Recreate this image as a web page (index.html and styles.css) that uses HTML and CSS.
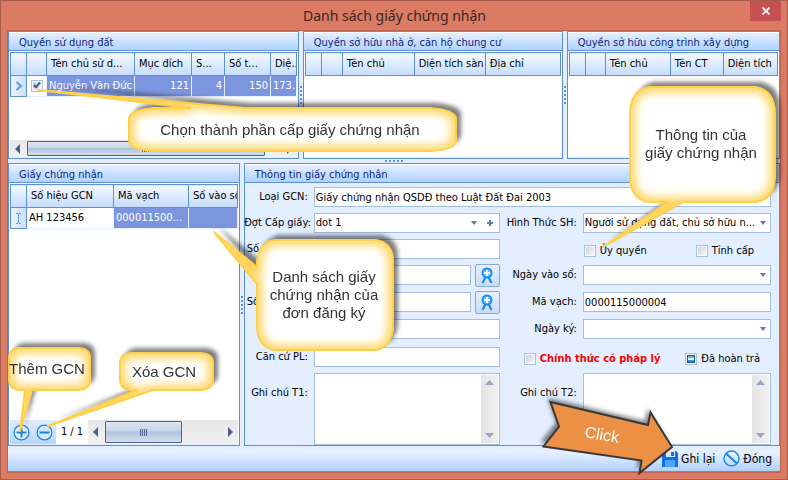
FILE: index.html
```html
<!DOCTYPE html>
<html lang="vi">
<head>
<meta charset="utf-8">
<title>Danh sách giấy chứng nhận</title>
<link rel="stylesheet" href="styles.css">
</head>
<body>
<div class="window">
  <header class="titlebar">
    <h1 class="title">Danh sách giấy chứng nhận</h1>
    <button class="close" type="button" aria-label="Close"><svg width="10" height="8" viewBox="0 0 10 8"><path d="M1.5 .5l7 7M8.5 .5l-7 7" stroke="#fff" stroke-width="1.8"/></svg></button>
  </header>
  <main class="client">
    <div class="top">
      <section class="panel panel-land">
        <h2 class="panel-title">Quyền sử dụng đất</h2>
        <div class="panel-body">
          <table class="grid">
            <colgroup><col class="w16"><col class="w20"><col class="w88"><col class="w57"><col class="w33"><col class="w46"><col></colgroup>
            <thead><tr><th></th><th></th><th>Tên chủ sử d...</th><th>Mục đích</th><th>S...</th><th>Số t...</th><th>Diệ...</th></tr></thead>
            <tbody><tr>
              <td class="mark"><svg width="8" height="10" viewBox="0 0 8 10"><path d="M1.500 1l4.500 4-4.500 4" fill="none" stroke="#5e9be6" stroke-width="2"/></svg></td>
              <td class="pick"><input class="check" type="checkbox" checked aria-label="Nguyễn Văn Đức"></td>
              <td class="sel">Nguyễn Văn Đức</td><td class="sel num">121</td><td class="sel num">4</td><td class="sel num">150</td><td class="sel">173.</td>
            </tr></tbody>
          </table>
          <div class="hscroll hscroll-land">
            <svg width="17" height="16" viewBox="0 0 17 16"><path d="M10 3v10L5 8z" fill="#4a5f8c"/></svg>
            <span class="thumb"><i class="grip"></i></span>
            <svg width="32" height="16" viewBox="0 0 32 16"><path d="M22 3v10l5-5z" fill="#4a5f8c"/></svg>
          </div>
        </div>
      </section>
      <div class="split-v"><i class="dots-v"></i></div>
      <section class="panel panel-house">
        <h2 class="panel-title">Quyền sở hữu nhà ở, căn hộ chung cư</h2>
        <div class="panel-body">
          <table class="grid">
            <colgroup><col class="w16"><col class="w21"><col class="w72"><col class="w71"><col></colgroup>
            <thead><tr><th></th><th></th><th>Tên chủ</th><th>Diện tích sàn</th><th>Địa chỉ</th></tr></thead>
          </table>
        </div>
      </section>
      <div class="split-v"><i class="dots-v"></i></div>
      <section class="panel panel-works">
        <h2 class="panel-title">Quyền sở hữu công trình xây dựng</h2>
        <div class="panel-body">
          <table class="grid">
            <colgroup><col class="w16"><col class="w20"><col class="w65"><col class="w53"><col></colgroup>
            <thead><tr><th></th><th></th><th>Tên chủ</th><th>Tên CT</th><th>Diện tích</th></tr></thead>
          </table>
        </div>
      </section>
    </div>
    <div class="split-h"><i class="dots-h"></i></div>
    <div class="bottom">
      <section class="panel panel-certs">
        <h2 class="panel-title">Giấy chứng nhận</h2>
        <div class="panel-body">
          <table class="grid">
            <colgroup><col class="w16"><col class="w87"><col class="w75"><col></colgroup>
            <thead><tr><th></th><th>Số hiệu GCN</th><th>Mã vạch</th><th>Số vào sổ</th></tr></thead>
            <tbody><tr>
              <td class="mark"><svg width="7" height="11" viewBox="0 0 7 11"><path d="M1 .5h2M4 .5h2M1 10.500h2M4 10.500h2M3.500 1v9" stroke="#5e9be6"/></svg></td>
              <td>AH 123456</td><td class="sel">000011500...</td><td class="sel"></td>
            </tr></tbody>
          </table>
          <div class="navigator">
            <div class="nav-buttons">
              <button class="round" type="button" aria-label="Thêm GCN"><svg width="17" height="17" viewBox="0 0 17 17"><circle cx="8.500" cy="8.500" r="7.400" fill="#e4f0ff" stroke="#1e86e0" stroke-width="1.300"/><path d="M3.500 8.500h10M8.500 3.500v10" stroke="#1680e4" stroke-width="2"/></svg></button>
              <button class="round" type="button" aria-label="Xóa GCN"><svg width="17" height="17" viewBox="0 0 17 17"><circle cx="8.500" cy="8.500" r="7.400" fill="#d2e6ff" stroke="#1e86e0" stroke-width="1.300"/><path d="M3.500 8.500h10" stroke="#1680e4" stroke-width="2"/></svg></button>
            </div>
            <span class="pager">1 / 1</span>
            <div class="hscroll hscroll-certs">
              <svg width="17" height="24" viewBox="0 0 17 24"><path d="M10 7v10l-5-5z" fill="#4a5f8c"/></svg>
              <span class="thumb"><i class="grip"></i></span>
              <svg class="push" width="17" height="24" viewBox="0 0 17 24"><path d="M7 7v10l5-5z" fill="#4a5f8c"/></svg>
            </div>
          </div>
        </div>
      </section>
      <div class="split-v"><i class="dots-v"></i></div>
      <section class="panel panel-info">
        <h2 class="panel-title">Thông tin giấy chứng nhân</h2>
        <form class="form">
          <label for="kind">Loại GCN:</label>
          <input class="box wide" id="kind" value="Giấy chứng nhận QSDĐ theo Luật Đất Đai 2003">

          <label class="flush" for="batch">Đợt Cấp giấy:</label>
          <div class="box combo">
            <select id="batch"><option>dot 1</option></select>
            <svg class="arrow" width="6" height="4" viewBox="0 0 6 4"><path d="M0 0h6L3 4z" fill="#5680b4"/></svg>
            <button class="plus" type="button" aria-label="+"><svg width="6" height="6" viewBox="0 0 6 6"><path d="M0 3h6M3 0v6" stroke="#5680b4" stroke-width="2"/></svg></button>
          </div>
          <label for="owner">Hình Thức SH:</label>
          <div class="box combo">
            <select id="owner"><option>Người sử dụng đất, chủ sở hữu n...</option></select>
            <svg class="arrow" width="6" height="4" viewBox="0 0 6 4"><path d="M0 0h6L3 4z" fill="#5680b4"/></svg>
          </div>

          <label class="start" for="serial">Số h:</label>
          <input class="box" id="serial">
          <div class="checks checks-a">
            <label class="opt"><input class="check" type="checkbox">Ủy quyền</label>
            <label class="opt"><input class="check" type="checkbox">Tỉnh cấp</label>
          </div>

          <div class="lookup">
            <input class="box" aria-label="Số">
            <button class="badge" type="button" aria-label="Số"><svg width="14" height="17" viewBox="0 0 14 17"><path d="M5.500 10L2.500 16M8.500 10l3 6" fill="none" stroke="#168aef" stroke-width="2.200"/><circle cx="7" cy="6" r="5.500" fill="#168aef"/><circle cx="7" cy="6" r="3.800" fill="#63bdff"/><path d="M4 6h6M7 3v6" stroke="#fff" stroke-width="2"/></svg></button>
          </div>
          <label for="date-in">Ngày vào sổ:</label>
          <div class="box combo">
            <select id="date-in"><option></option></select>
            <svg class="arrow" width="6" height="4" viewBox="0 0 6 4"><path d="M0 0h6L3 4z" fill="#5680b4"/></svg>
          </div>

          <label class="start" for="book">Số</label>
          <div class="lookup">
            <input class="box" id="book">
            <button class="badge" type="button" aria-label="Số"><svg width="14" height="17" viewBox="0 0 14 17"><path d="M5.500 10L2.500 16M8.500 10l3 6" fill="none" stroke="#168aef" stroke-width="2.200"/><circle cx="7" cy="6" r="5.500" fill="#168aef"/><circle cx="7" cy="6" r="3.800" fill="#63bdff"/><path d="M4 6h6M7 3v6" stroke="#fff" stroke-width="2"/></svg></button>
          </div>
          <label for="barcode">Mã vạch:</label>
          <input class="box" id="barcode" value="0000115000004">

          <input class="box second" aria-label="Người ký">
          <label for="date-sign">Ngày ký:</label>
          <div class="box combo">
            <select id="date-sign"><option></option></select>
            <svg class="arrow" width="6" height="4" viewBox="0 0 6 4"><path d="M0 0h6L3 4z" fill="#5680b4"/></svg>
          </div>

          <label for="basis">Căn cứ PL:</label>
          <input class="box" id="basis">
          <div class="checks checks-b">
            <label class="opt legal"><input class="check" type="checkbox">Chính thức có pháp lý</label>
            <label class="opt"><input class="check mixed" type="checkbox">Đã hoàn trả</label>
          </div>

          <label class="note" for="note1">Ghi chú T1:</label>
          <div class="box memo">
            <textarea id="note1"></textarea>
            <div class="vscroll"><svg width="9" height="5" viewBox="0 0 9 5"><path d="M0 5h9L4.500 0z" fill="#98a6cc"/></svg><svg width="9" height="5" viewBox="0 0 9 5"><path d="M0 0h9L4.500 5z" fill="#98a6cc"/></svg></div>
          </div>
          <label class="note" for="note2">Ghi chú T2:</label>
          <div class="box memo">
            <textarea id="note2"></textarea>
            <div class="vscroll"><svg width="9" height="5" viewBox="0 0 9 5"><path d="M0 5h9L4.500 0z" fill="#98a6cc"/></svg><svg width="9" height="5" viewBox="0 0 9 5"><path d="M0 0h9L4.500 5z" fill="#98a6cc"/></svg></div>
          </div>
        </form>
      </section>
    </div>
    <footer class="actions">
      <button class="action" type="button"><svg width="16" height="16" viewBox="0 0 16 16"><path d="M0 0h14l2 2v14H0z" fill="#0f6fe8"/><path d="M4 0h9v6H4z" fill="#d5e9ff"/><path d="M9 1h3v4H9z" fill="#0f6fe8"/><path d="M3 9h10v7H3z" fill="#4ea6fa"/></svg>Ghi lại</button>
      <button class="action" type="button"><svg width="17" height="17" viewBox="0 0 17 17"><circle cx="8.500" cy="8.500" r="7.500" fill="none" stroke="#1c8ae8" stroke-width="1.400"/><path d="M3 3.500l11 10" stroke="#1c8ae8" stroke-width="2.200"/></svg>Đóng</button>
    </footer>
  </main>

  <svg class="callouts" width="788" height="480" viewBox="0 0 788 480">
    <defs>
      <filter id="soft" x="-20%" y="-20%" width="140%" height="140%"><feGaussianBlur stdDeviation="2"/></filter>
      <filter id="glow" x="-20%" y="-20%" width="140%" height="140%"><feGaussianBlur stdDeviation="5"/></filter>
      <path id="c1" d="M154 108H190L38 90L245 108H430Q456 110 456 119V140Q456 150 430 151H154Q129 150 129 140V119Q129 110 154 108Z"/>
      <path id="c2" d="M649 87H756Q775 91 775 114V176Q775 199 756 202H683L603 247L667 202H649Q630 199 630 176V114Q630 91 649 87Z"/>
      <path id="c3" d="M274 240H376Q393 243 393 261V329Q391 347 376 350H274Q259 347 257 329V284L214 232L257 267V261Q259 243 274 240Z"/>
      <path id="c4" d="M19 348H79Q90 349 90 358V380Q90 389 79 390H32L20 431L25 390H19Q9 389 9 380V358Q9 349 19 348Z"/>
      <path id="c5" d="M131 353H201Q213 354 213 363V380Q213 389 201 390H153L48 426L137 390H131Q120 389 120 380V363Q120 354 131 353Z"/>
      <path id="arrow" d="M550.500 402L648 425L650.500 412.500L672 447L639.500 473L641.500 460.500L543.500 446.500L559 426.500Z"/>
      <clipPath id="k1"><use href="#c1"/></clipPath>
      <clipPath id="k2"><use href="#c2"/></clipPath>
      <clipPath id="k3"><use href="#c3"/></clipPath>
      <clipPath id="k4"><use href="#c4"/></clipPath>
      <clipPath id="k5"><use href="#c5"/></clipPath>
    </defs>
    <g class="shadow">
      <use href="#c1" x="5" y="-5"/><use href="#c2" x="5" y="-5"/><use href="#c3" x="5" y="-5"/><use href="#c4" x="5" y="-5"/><use href="#c5" x="5" y="-5"/><use href="#arrow" x="-3" y="-4"/>
    </g>
    <g class="face"><use href="#c1"/><use href="#c2"/><use href="#c3"/><use href="#c4"/><use href="#c5"/></g>
    <g class="inner">
      <g clip-path="url(#k1)"><use href="#c1" filter="url(#glow)"/></g>
      <g clip-path="url(#k2)"><use href="#c2" filter="url(#glow)"/></g>
      <g clip-path="url(#k3)"><use href="#c3" filter="url(#glow)"/></g>
      <g clip-path="url(#k4)"><use href="#c4" filter="url(#glow)"/></g>
      <g clip-path="url(#k5)"><use href="#c5" filter="url(#glow)"/></g>
    </g>
    <g class="rim"><use href="#c1"/><use href="#c2"/><use href="#c3"/><use href="#c4"/><use href="#c5"/></g>
    <use class="arrow-face" href="#arrow"/>
    <g class="words">
      <text x="290" y="135">Chọn thành phần cấp giấy chứng nhận</text>
      <text x="701" y="140">Thông tin của</text>
      <text x="701" y="158">giấy chứng nhận</text>
      <text x="324" y="282">Danh sách giấy</text>
      <text x="324" y="300">chứng nhận của</text>
      <text x="324" y="318">đơn đăng ký</text>
      <text x="47" y="374">Thêm GCN</text>
      <text x="164" y="377">Xóa GCN</text>
      <text class="click" x="602" y="440" transform="rotate(10 602 434)">Click</text>
    </g>
  </svg>
</div>
</body>
</html>
```
FILE: styles.css
```css
* { box-sizing: border-box; }

body {
  margin: 0;
  font: 11px/14px "DejaVu Sans Condensed", "Noto Sans", sans-serif;
  color: #000;
}

button, input, select, textarea { font: inherit; color: inherit; }

button { padding: 0; border: 0; background: none; }

svg { display: block; flex: none; }

.window {
  position: relative;
  display: flex;
  flex-direction: column;
  min-height: 100vh;
  padding: 0 7px 7px;
  border: 1px solid #a85c4c;
  background: #db7b63;
}

.titlebar {
  display: grid;
  grid-template-columns: 31px 1fr 31px;
  height: 30px;
  margin-right: -1px;
}

.title {
  grid-column: 2;
  margin: 0;
  font: 14px/30px "Noto Sans", sans-serif;
  color: #3a2622;
  text-align: center;
}

.close {
  display: flex;
  align-items: center;
  justify-content: center;
  height: 20px;
  background: #c75050;
}

.client {
  flex: 1;
  display: flex;
  flex-direction: column;
  background: #e3eeff;
  outline: 1px solid #c0654f;
}

.top { display: flex; height: 128px; }

.bottom { flex: 1; display: flex; }

.panel {
  display: flex;
  flex-direction: column;
  min-width: 0;
  border: 1px solid #5f90cf;
  background: #e3eeff;
}

.panel-land { flex: 291 1 0; }
.panel-house { flex: 260 1 0; }
.panel-works { flex: 213 1 0; }
.panel-certs { flex: 231 1 0; }
.panel-info { flex: 537 1 0; }

.panel-title {
  margin: 0;
  height: 19px;
  padding: 0 10px;
  border-top: 1px solid #fff;
  border-bottom: 1px solid #5f90cf;
  background: linear-gradient(#e4efff, #b0d2ff);
  font: inherit;
  line-height: 19px;
  color: #0a1e80;
  white-space: nowrap;
}

.panel-body {
  flex: 1;
  display: flex;
  flex-direction: column;
  min-width: 0;
  padding: 1px 1px 0;
  background: #fff;
  border: 0 solid #e3eeff;
  border-width: 0 0 1px;
}

.grid {
  width: 100%;
  table-layout: fixed;
  border-collapse: collapse;
}

.grid th {
  height: 23px;
  padding: 0 0 0 4px;
  border: 1px solid #5f90cf;
  background: linear-gradient(#f4f9ff, #c4dcfb);
  font-weight: normal;
  text-align: left;
  white-space: nowrap;
  overflow: hidden;
}

.grid td {
  height: 21px;
  padding: 0 2px;
  border-right: 1px solid #e3eeff;
  border-bottom: 1px solid #e3eeff;
  white-space: nowrap;
  overflow: hidden;
}

.grid .mark {
  padding: 0 0 0 4px;
  border: 1px solid #5f90cf;
  background: linear-gradient(90deg, #eef5ff, #c8defc);
}

.grid .pick { padding: 0 0 0 4px; }
.grid .sel { background: #7b96df; color: #fff; }
.grid .num { text-align: right; }

.w16 { width: 16px; }
.w20 { width: 20px; }
.w21 { width: 21px; }
.w33 { width: 33px; }
.w46 { width: 46px; }
.w53 { width: 53px; }
.w57 { width: 57px; }
.w65 { width: 65px; }
.w71 { width: 71px; }
.w72 { width: 72px; }
.w75 { width: 75px; }
.w87 { width: 87px; }
.w88 { width: 88px; }

.check {
  appearance: none;
  display: block;
  flex: none;
  width: 12px;
  height: 12px;
  margin: 0;
  border: 1px solid #a9c0de;
  background: linear-gradient(135deg, #c9cdd4, #fbfbfb);
  box-shadow: inset 0 0 0 1px #f4f8ff;
}

.check:checked::before {
  content: "";
  display: block;
  width: 2px;
  height: 5px;
  margin: 0 0 0 3px;
  border: solid #3d5d8a;
  border-width: 0 2px 2px 0;
  transform: rotate(40deg);
}

.mixed::before {
  content: "";
  display: block;
  width: 6px;
  height: 6px;
  margin: 1px;
  border: 1px solid #1d5b8e;
  background: linear-gradient(#6fb0dc 35%, #e6f6ff 35% 65%, #3f8cc0 65%);
}

.hscroll {
  display: flex;
  align-items: center;
  min-width: 0;
  background: linear-gradient(#e6e6e6, #f0f0f0);
}

.hscroll-land { height: 17px; margin-top: auto; }
.hscroll-land .thumb { flex: 1; height: 15px; }
.hscroll-certs { flex: 1; }
.hscroll-certs .thumb { width: 77px; height: 22px; }
.push { margin-left: auto; }

.thumb {
  display: flex;
  align-items: center;
  justify-content: center;
  border: 1px solid #4d6390;
  border-radius: 1px;
  background: linear-gradient(#dde6f1, #c8d5e6 45%, #b0c2da 50%, #d3deeb);
}

.grip {
  width: 8px;
  height: 7px;
  background: repeating-linear-gradient(90deg, #4d6390 0 1px, transparent 1px 2px);
}

.split-v, .split-h {
  display: flex;
  align-items: center;
  justify-content: center;
  background: #e3eeff;
}

.split-v { width: 4px; }
.split-h { height: 4px; }

.dots-v {
  width: 2px;
  height: 18px;
  background: repeating-linear-gradient(#5f90cf 0 2px, transparent 2px 4px);
}

.dots-h {
  width: 18px;
  height: 2px;
  background: repeating-linear-gradient(90deg, #5f90cf 0 2px, transparent 2px 4px);
}

.navigator { display: flex; height: 24px; margin-top: auto; }

.nav-buttons {
  display: flex;
  gap: 6px;
  align-items: center;
  width: 46px;
  padding-left: 3px;
  background: linear-gradient(#dfecff, #b9d5fb);
}

.pager { width: 32px; line-height: 24px; text-align: center; }

.form {
  flex: 1;
  display: grid;
  grid-template-columns: 66px 186px 77px 1fr;
  grid-template-rows: repeat(3, 26px) repeat(2, 27px) 28px 26px 1fr;
  column-gap: 3px;
  padding: 4px 8px 0 0;
}

.form > label {
  justify-self: end;
  height: 20px;
  padding-right: 3px;
  line-height: 20px;
  white-space: nowrap;
}

.form > .flush { padding: 0; }
.form > .start { justify-self: start; padding-left: 2px; }
.form > label.note { line-height: 40px; }

.box {
  width: 100%;
  height: 20px;
  min-width: 0;
  padding: 0 1px;
  border: 1px solid #a3bfe0;
  background: #fff;
}

.wide { grid-column: 2 / -1; }
.second { grid-column: 2; }

.combo { display: flex; align-items: center; padding: 0 4px 0 0; }

.combo select {
  appearance: none;
  flex: 1;
  min-width: 0;
  height: 18px;
  padding: 0 1px;
  border: 0;
  background: none;
}

.plus { margin: 0 2px 0 10px; }

.lookup { grid-column: 2; display: flex; gap: 4px; }

.badge {
  display: flex;
  flex: none;
  align-items: center;
  justify-content: center;
  width: 25px;
  height: 23px;
  margin-top: -1px;
  border: 1px solid #8ba9d0;
  border-radius: 2px;
  background: linear-gradient(#e6f0fd, #c9dcf5);
}

.checks { grid-column: 3 / -1; display: flex; height: 20px; justify-content: space-between; margin-top: 2px; }
.checks-a { padding: 0 17px 0 81px; }
.checks-b { padding: 0 11px 0 21px; }

.opt { display: flex; align-items: center; gap: 4px; white-space: nowrap; }
.legal { font-weight: bold; color: #f00; }

.memo { display: flex; height: auto; padding: 1px; }

.memo textarea {
  flex: 1;
  min-width: 0;
  padding: 0 2px;
  border: 0;
  resize: none;
  overflow: hidden;
  background: none;
}

.vscroll {
  display: flex;
  flex-direction: column;
  align-items: center;
  justify-content: space-between;
  width: 17px;
  padding: 5px 0;
  background: linear-gradient(90deg, #e4e4e4, #f0f0f0);
}

.actions {
  display: flex;
  gap: 8px;
  align-items: center;
  justify-content: flex-end;
  height: 26px;
  padding-right: 8px;
  border-bottom: 1px solid #5f90cf;
  background: linear-gradient(#e3eeff 30%, #b0d1fb);
}

.action { display: flex; gap: 3px; align-items: center; font-size: 12px; }

.callouts {
  position: absolute;
  top: -1px;
  left: -1px;
  pointer-events: none;
}

.shadow { fill: #000; opacity: .5; filter: url(#soft); }
.face { fill: #fff; }
.inner { fill: none; stroke: #ffd257; stroke-width: 10px; }
.rim { fill: none; stroke: #ffd04a; stroke-width: 2px; stroke-linejoin: round; }
.arrow-face { fill: #ec9045; stroke: #383838; stroke-width: 2px; }

.words {
  font-family: "Liberation Sans", sans-serif;
  font-size: 15px;
  fill: #333;
  text-anchor: middle;
}

.words .click { fill: #fff; font-size: 16px; }
```
